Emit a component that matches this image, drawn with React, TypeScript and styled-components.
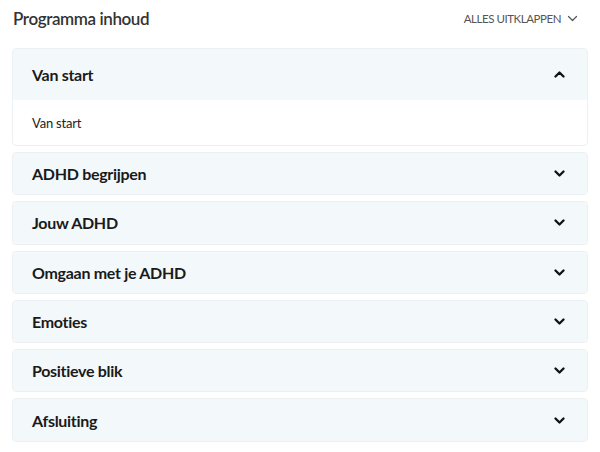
import { FC, useState } from "react";
import styled, { createGlobalStyle } from "styled-components";

const GlobalStyle = createGlobalStyle`
  body {
    margin: 0;
    background: #ffffff;
    font-family: Lato, "Noto Sans", sans-serif;
    color: #1c1c1c;
  }
`;

const Page = styled.div`
  padding: 6px 12px 0 12px;
`;

const TopBar = styled.div`
  display: flex;
  align-items: center;
  justify-content: space-between;
  height: 24px;
  margin-bottom: 18px;
`;

const Title = styled.h2`
  margin: 0 0 0 1px;
  font-size: 17px;
  font-weight: 600;
  letter-spacing: -0.4px;
  color: #333;
`;

const ExpandAll = styled.button`
  display: flex;
  align-items: center;
  gap: 6px;
  border: none;
  background: none;
  padding: 0 10px 0 0;
  font-family: inherit;
  font-size: 11.5px;
  letter-spacing: -0.45px;
  color: #555;
  text-transform: uppercase;
  cursor: pointer;
`;

const List = styled.div`
  display: flex;
  flex-direction: column;
  gap: 6px;
`;

const Card = styled.div`
  border: 1px solid #edf0f2;
  border-radius: 4px;
  overflow: hidden;
  background: #fff;
`;

const Header = styled.button<{ $open: boolean }>`
  display: flex;
  width: 100%;
  align-items: center;
  justify-content: space-between;
  height: ${(p) => (p.$open ? 51 : 41.3)}px;
  padding: 0 22px 0 19px;
  border: none;
  background: #f3f8fb;
  font-family: inherit;
  font-size: 16px;
  font-weight: 700;
  letter-spacing: -0.3px;
  color: #1a1a1a;
  cursor: pointer;
`;

const Body = styled.div`
  height: 45px;
  display: flex;
  align-items: center;
  padding: 0 19px;
  font-size: 13px;
  letter-spacing: -0.2px;
  color: #222;
`;

const Chevron: FC<{ up?: boolean; thin?: boolean }> = ({ up, thin }) => (
  <svg
    width={11}
    height={7}
    viewBox="0 0 11 7"
    fill="none"
    stroke={thin ? "#555" : "#111"}
    strokeWidth={thin ? 1.2 : 2.3}
    strokeLinecap="round"
    strokeLinejoin="round"
  >
    <path d={up ? "M1.5 5.5 5.5 1.5 9.5 5.5" : "M1.5 1.5 5.5 5.5 9.5 1.5"} />
  </svg>
);

const sections = [
  { title: "Van start", lessons: ["Van start"] },
  { title: "ADHD begrijpen", lessons: [] },
  { title: "Jouw ADHD", lessons: [] },
  { title: "Omgaan met je ADHD", lessons: [] },
  { title: "Emoties", lessons: [] },
  { title: "Positieve blik", lessons: [] },
  { title: "Afsluiting", lessons: [] },
];

export default function App() {
  const [open, setOpen] = useState<number[]>([0]);

  const toggle = (i: number) =>
    setOpen((o) => (o.includes(i) ? o.filter((x) => x !== i) : [...o, i]));

  return (
    <>
      <GlobalStyle />
      <Page>
        <TopBar>
          <Title>Programma inhoud</Title>
          <ExpandAll onClick={() => setOpen(sections.map((_, i) => i))}>
            Alles uitklappen
            <Chevron thin />
          </ExpandAll>
        </TopBar>
        <List>
          {sections.map((s, i) => {
            const isOpen = open.includes(i);
            return (
              <Card key={s.title}>
                <Header $open={isOpen} onClick={() => toggle(i)}>
                  {s.title}
                  <Chevron up={isOpen} />
                </Header>
                {isOpen &&
                  s.lessons.map((l) => <Body key={l}>{l}</Body>)}
              </Card>
            );
          })}
        </List>
      </Page>
    </>
  );
}
